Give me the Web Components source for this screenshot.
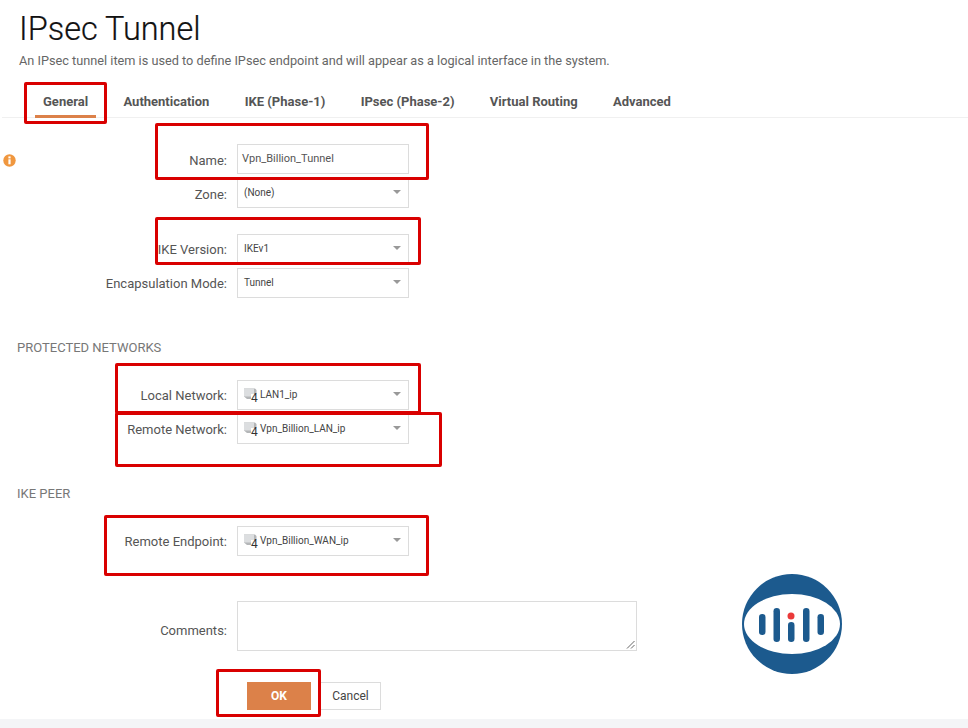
<!DOCTYPE html>
<html>
<head>
<meta charset="utf-8">
<title>IPsec Tunnel</title>
<style>
  html, body { margin: 0; background: #fff; }
  body { font-family: Roboto, "Liberation Sans", sans-serif; width: 968px; height: 728px; overflow: hidden; position: relative; }
</style>
</head>
<body>
<page-header heading="IPsec Tunnel" text="An IPsec tunnel item is used to define IPsec endpoint and will appear as a logical interface in the system."></page-header>
<tab-bar tabs="General|Authentication|IKE (Phase-1)|IPsec (Phase-2)|Virtual Routing|Advanced"></tab-bar>
<tunnel-form>
  <form-row label="Name:" gap="26" drop="4"><text-box value="Vpn_Billion_Tunnel"></text-box></form-row>
  <form-row label="Zone:" gap="4" drop="4"><select-box value="(None)"></select-box></form-row>
  <form-row label="IKE Version:" gap="26"><select-box value="IKEv1"></select-box></form-row>
  <form-row label="Encapsulation Mode:" gap="4"><select-box value="Tunnel"></select-box></form-row>
  <section-title gap="42">PROTECTED NETWORKS</section-title>
  <form-row label="Local Network:" gap="24"><select-box value="LAN1_ip" net></select-box></form-row>
  <form-row label="Remote Network:" gap="4"><select-box value="Vpn_Billion_LAN_ip" net></select-box></form-row>
  <section-title gap="42">IKE PEER</section-title>
  <form-row label="Remote Endpoint:" gap="24"><select-box value="Vpn_Billion_WAN_ip" net></select-box></form-row>
  <form-row label="Comments:" gap="45" drop="10"><comment-box></comment-box></form-row>
  <form-actions></form-actions>
</tunnel-form>
<page-footer></page-footer>

<info-icon></info-icon>
<red-mark x="24" y="82" w="83" h="42"></red-mark>
<red-mark x="155" y="123" w="274" h="57"></red-mark>
<red-mark x="155" y="217" w="266" h="48"></red-mark>
<red-mark x="115" y="363" w="306" h="51"></red-mark>
<red-mark x="115" y="412" w="327" h="55"></red-mark>
<red-mark x="104" y="515" w="325" h="61"></red-mark>
<red-mark x="216" y="669" w="105" h="48"></red-mark>
<brand-logo></brand-logo>

<script>
// small helper, every element below just sets its own shadow html
function shadow(el, html) {
  el.attachShadow({ mode: 'open' });
  el.shadowRoot.innerHTML = html;
}

class PageHeader extends HTMLElement {
  connectedCallback() {
    shadow(this, `<style>
      :host { display: block; padding: 11px 0 0 19px; }
      h1 { margin: 0; font: 300 32.5px/36px Roboto, sans-serif; color: #111; -webkit-text-stroke: 0.2px #111; }
      p { margin: 6px 0 0; font: 400 12.73px/16px Roboto, sans-serif; color: #666; }
    </style>
    <h1>${this.getAttribute('heading')}</h1>
    <p>${this.getAttribute('text')}</p>`);
  }
}

class TabBar extends HTMLElement {
  connectedCallback() {
    const tabs = this.getAttribute('tabs').split('|');
    shadow(this, `<style>
      :host { display: block; margin: 14px 0 0 2px; padding-left: 33px; border-bottom: 1px solid #f0f0f0; height: 34px; }
      nav { display: flex; gap: 19.3px; }
      span { padding: 0 8px; height: 35px; line-height: 37px; font-size: 13px; font-weight: 700; color: #555; box-sizing: border-box; }
      span.on { border-bottom: 3px solid #dc8149; }
    </style>
    <nav>${tabs.map((t, i) => `<span class="${i ? '' : 'on'}">${t}</span>`).join('')}</nav>`);
  }
}

class TunnelForm extends HTMLElement {
  connectedCallback() {
    shadow(this, `<style>:host { display: block; }</style><slot></slot>`);
  }
}

class FormRow extends HTMLElement {
  connectedCallback() {
    shadow(this, `<style>
      :host { display: flex; align-items: center; margin-top: ${this.getAttribute('gap') || 4}px; }
      label { width: 227px; margin-right: 10px; text-align: right; font-size: 13px; line-height: 16px; padding-top: ${this.getAttribute('drop') || 2}px; color: #555; }
    </style>
    <label>${this.getAttribute('label')}</label><slot></slot>`);
  }
}

class SectionTitle extends HTMLElement {
  connectedCallback() {
    shadow(this, `<style>
      :host { display: block; margin-top: ${this.getAttribute('gap')}px; padding-left: 17px; font-size: 13px; line-height: 16px; color: #777; }
    </style><slot></slot>`);
  }
}

class TextBox extends HTMLElement {
  connectedCallback() {
    shadow(this, `<style>
      :host { display: flex; align-items: center; box-sizing: border-box; width: 172px; height: 30px; border: 1px solid #dcdcdc; padding: 0 0 2px 4px; font-size: 11px; color: #555; background: #fff; }
    </style>${this.getAttribute('value')}`);
  }
}

class SelectBox extends HTMLElement {
  connectedCallback() {
    const net = this.hasAttribute('net');
    shadow(this, `<style>
      :host { display: flex; align-items: center; box-sizing: border-box; width: 172px; height: 30px; border: 1px solid #dcdcdc; padding: 0 7px 2px 6px; font-size: 10px; color: #444; background: #fff; }
      .txt { flex: 1; white-space: nowrap; }
      .net { position: relative; width: 16px; height: 16px; margin-top: 3px; flex: none; }
      .net svg { position: absolute; left: 0; top: 0; }
      .net b { position: absolute; left: 7px; top: 3px; font: 400 12px/14px Roboto, sans-serif; color: #333; }
      .arrow { width: 0; height: 0; border: 4px solid transparent; border-top: 4.5px solid #999; border-bottom: 0; margin-top: -1px; }
    </style>
    ${net ? `<span class="net"><svg width="14" height="14" viewBox="0 0 14 14"><path d="M0 0.5 H11 L12.5 2 V6 H7 V11 H3 L0 8.5 Z" fill="#b4b6b8"/><path d="M0 0.5 H10 V6 H7 V8.5 H0 Z" fill="#dcdee0"/></svg><b>4</b></span>` : ''}
    <span class="txt">${this.getAttribute('value')}</span>
    <span class="arrow"></span>`);
  }
}

class CommentBox extends HTMLElement {
  connectedCallback() {
    shadow(this, `<style>
      :host { display: block; position: relative; box-sizing: border-box; width: 400px; height: 50px; border: 1px solid #dcdcdc; background: #fff; }
      svg { position: absolute; right: 1px; bottom: 1px; }
    </style>
    <svg width="9" height="9" viewBox="0 0 9 9"><path d="M1 8.5 L8.5 1 M5 8.5 L8.5 5" stroke="#666" stroke-width="1" fill="none"/></svg>`);
  }
}

class FormActions extends HTMLElement {
  connectedCallback() {
    shadow(this, `<style>
      :host { display: flex; gap: 9px; margin: 31px 0 0 247px; }
      div { box-sizing: border-box; height: 28px; display: flex; align-items: center; justify-content: center; font-size: 12px; }
      .ok { width: 64px; background: #dc8149; color: #fff; font-weight: 700; }
      .cancel { width: 61px; border: 1px solid #dcdcdc; color: #444; }
    </style>
    <div class="ok">OK</div><div class="cancel">Cancel</div>`);
  }
}

class PageFooter extends HTMLElement {
  connectedCallback() {
    shadow(this, `<style>:host { display: block; height: 9px; margin-top: 9px; background: #f4f5f7; }</style>`);
  }
}

class InfoIcon extends HTMLElement {
  connectedCallback() {
    shadow(this, `<style>:host { position: absolute; left: 3px; top: 154px; width: 13px; height: 13px; display: block; }</style>
    <svg width="13" height="13" viewBox="0 0 13 13" style="display:block"><circle cx="6.5" cy="6.5" r="6.2" fill="#f0973f"/><rect x="5.4" y="2.4" width="2.2" height="2" fill="#fff"/><rect x="5.4" y="5.3" width="2.2" height="5" fill="#fff"/></svg>`);
  }
}

class RedMark extends HTMLElement {
  connectedCallback() {
    const a = n => this.getAttribute(n);
    shadow(this, `<style>
      :host { position: absolute; left: ${a('x')}px; top: ${a('y')}px; width: ${a('w')}px; height: ${a('h')}px; box-sizing: border-box; border: 3.5px solid #d90000; border-radius: 2px; display: block; }
    </style>`);
  }
}

class BrandLogo extends HTMLElement {
  connectedCallback() {
    shadow(this, `<style>:host { position: absolute; left: 742px; top: 574px; width: 100px; height: 100px; display: block; }</style>
    <svg width="100" height="100" viewBox="0 0 100 100" style="display:block">
      <circle cx="50" cy="50" r="50" fill="#1c5a8e"/>
      <ellipse cx="50" cy="50" rx="48" ry="30" fill="#fff"/>
      <g fill="#1c5a8e">
        <rect x="17" y="40" width="6.5" height="21" rx="3.2"/>
        <rect x="31.5" y="34" width="6.5" height="34" rx="3.2"/>
        <rect x="46" y="48" width="6.5" height="20" rx="3.2"/>
        <rect x="61" y="34" width="6.5" height="34" rx="3.2"/>
        <rect x="75.5" y="40" width="6.5" height="21" rx="3.2"/>
      </g>
      <circle cx="49" cy="42" r="3.5" fill="#ea3a3a"/>
    </svg>`);
  }
}

customElements.define('page-header', PageHeader);
customElements.define('tab-bar', TabBar);
customElements.define('tunnel-form', TunnelForm);
customElements.define('form-row', FormRow);
customElements.define('section-title', SectionTitle);
customElements.define('text-box', TextBox);
customElements.define('select-box', SelectBox);
customElements.define('comment-box', CommentBox);
customElements.define('form-actions', FormActions);
customElements.define('page-footer', PageFooter);
customElements.define('info-icon', InfoIcon);
customElements.define('red-mark', RedMark);
customElements.define('brand-logo', BrandLogo);
</script>
</body>
</html>
